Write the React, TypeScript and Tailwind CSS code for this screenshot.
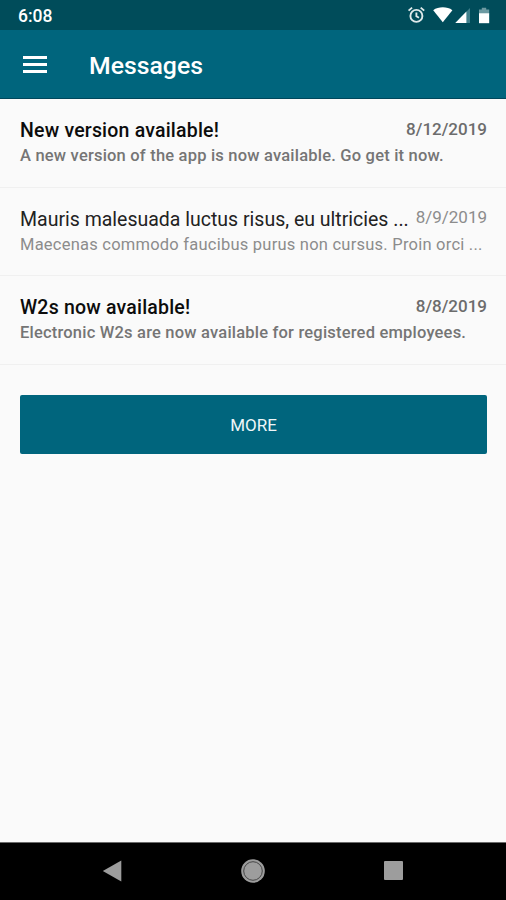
type Message = {
  id: number;
  title: string;
  preview: string;
  date: string;
  unread: boolean;
};

const messages: Message[] = [
  {
    id: 1,
    title: "New version available!",
    preview: "A new version of the app is now available. Go get it now.",
    date: "8/12/2019",
    unread: true,
  },
  {
    id: 2,
    title: "Mauris malesuada luctus risus, eu ultricies ...",
    preview: "Maecenas commodo faucibus purus non cursus. Proin orci ...",
    date: "8/9/2019",
    unread: false,
  },
  {
    id: 3,
    title: "W2s now available!",
    preview: "Electronic W2s are now available for registered employees.",
    date: "8/8/2019",
    unread: true,
  },
];

function StatusBar() {
  return (
    <div className="flex h-[30px] items-center justify-between bg-[#004c5a] pr-4 pl-[18px] text-white">
      <span className="pt-[2px] text-[17.5px] leading-5 font-medium">6:08</span>
      <svg width="83" height="18" viewBox="0 0 83 18" fill="none">
        <g stroke="#dfe9ea" strokeWidth="1.9">
          <circle cx="9.4" cy="9.9" r="6" />
          <path d="M9.4 6.4v3.8l2.6 1.6" />
          <path d="M1.6 4.6l3.5-3M17.2 4.6l-3.5-3" />
        </g>
        <path d="M26.2 4.2c5.2-3.8 14-3.8 19.2 0L35.8 16.2z" fill="#fff" />
        <path d="M63 2v15H48.3z" fill="#3f7f8b" />
        <path d="M59.4 5.6V17H48.3z" fill="#fff" />
        <path d="M72 3.6h2.8V1.8h4.4v1.8h3v4H72z" fill="#6d9aa2" />
        <path d="M72 7.2h10.2v10H72z" fill="#fff" />
      </svg>
    </div>
  );
}

function MessageRow({ message }: { message: Message }) {
  return (
    <li className="h-[88.6px] border-b border-[#f0f0f0] pt-5 pr-[19px] pl-5">
      <div className="flex justify-between">
        <h2
          className={
            message.unread
              ? "pb-px text-[19.5px] leading-6 font-medium tracking-[0.2px] whitespace-nowrap text-[#0c0c0c]"
              : "pb-px text-[19.5px] leading-6 whitespace-nowrap text-[#222]"
          }
        >
          {message.title}
        </h2>
        <span
          className={
            message.unread
              ? "text-[17px] leading-5 font-medium text-[#6c6c6c]"
              : "text-[17px] leading-[19px] text-[#8c8c8c]"
          }
        >
          {message.date}
        </span>
      </div>
      <p
        className={
          message.unread
            ? "text-[16.5px] leading-6 font-medium tracking-[0.2px] whitespace-nowrap text-[#757575]"
            : "text-[16.5px] leading-6 tracking-[0.23px] whitespace-nowrap text-[#8c8c8c]"
        }
      >
        {message.preview}
      </p>
    </li>
  );
}

function NavigationBar() {
  return (
    <nav className="flex h-[58px] items-center justify-between border-t border-[#6b6b6b] bg-black pr-[103px] pb-[2px] pl-[102px]">
      <svg width="20" height="22" viewBox="0 0 20 22" fill="#9d9d9d">
        <path d="M19.3 0.6v20.8L0.8 11z" />
      </svg>
      <svg width="24" height="24" viewBox="0 0 24 24">
        <circle cx="12" cy="12" r="11.8" fill="#9d9d9d" />
        <circle cx="12" cy="12" r="9.3" fill="none" stroke="#3c3c3c" strokeWidth="0.9" />
      </svg>
      <div className="size-[19px] rounded-[1px] bg-[#9d9d9d]" />
    </nav>
  );
}

export default function App() {
  return (
    <div className="flex h-[900px] w-[506px] flex-col overflow-hidden bg-[#fafafa] font-['Roboto',sans-serif]">
      <StatusBar />
      <header className="flex h-[69px] items-center border-b border-[#00475c] bg-[#00657d] pl-[23px] text-white">
        <button aria-label="Open menu" className="flex w-6 flex-col gap-1">
          <span className="h-[3px] bg-white" />
          <span className="h-[3px] bg-white" />
          <span className="h-[3px] bg-white" />
        </button>
        <h1 className="pt-1 pl-[42px] text-[24.8px] leading-8 font-medium">Messages</h1>
      </header>
      <main className="flex-1">
        <ul>
          {messages.map((message) => (
            <MessageRow key={message.id} message={message} />
          ))}
        </ul>
        <div className="px-5 pt-[30px]">
          <button className="h-[59px] w-[467px] rounded-[2px] bg-[#00657d] pt-[2px] text-[17px] text-[#eef6f8]">
            MORE
          </button>
        </div>
      </main>
      <NavigationBar />
    </div>
  );
}
